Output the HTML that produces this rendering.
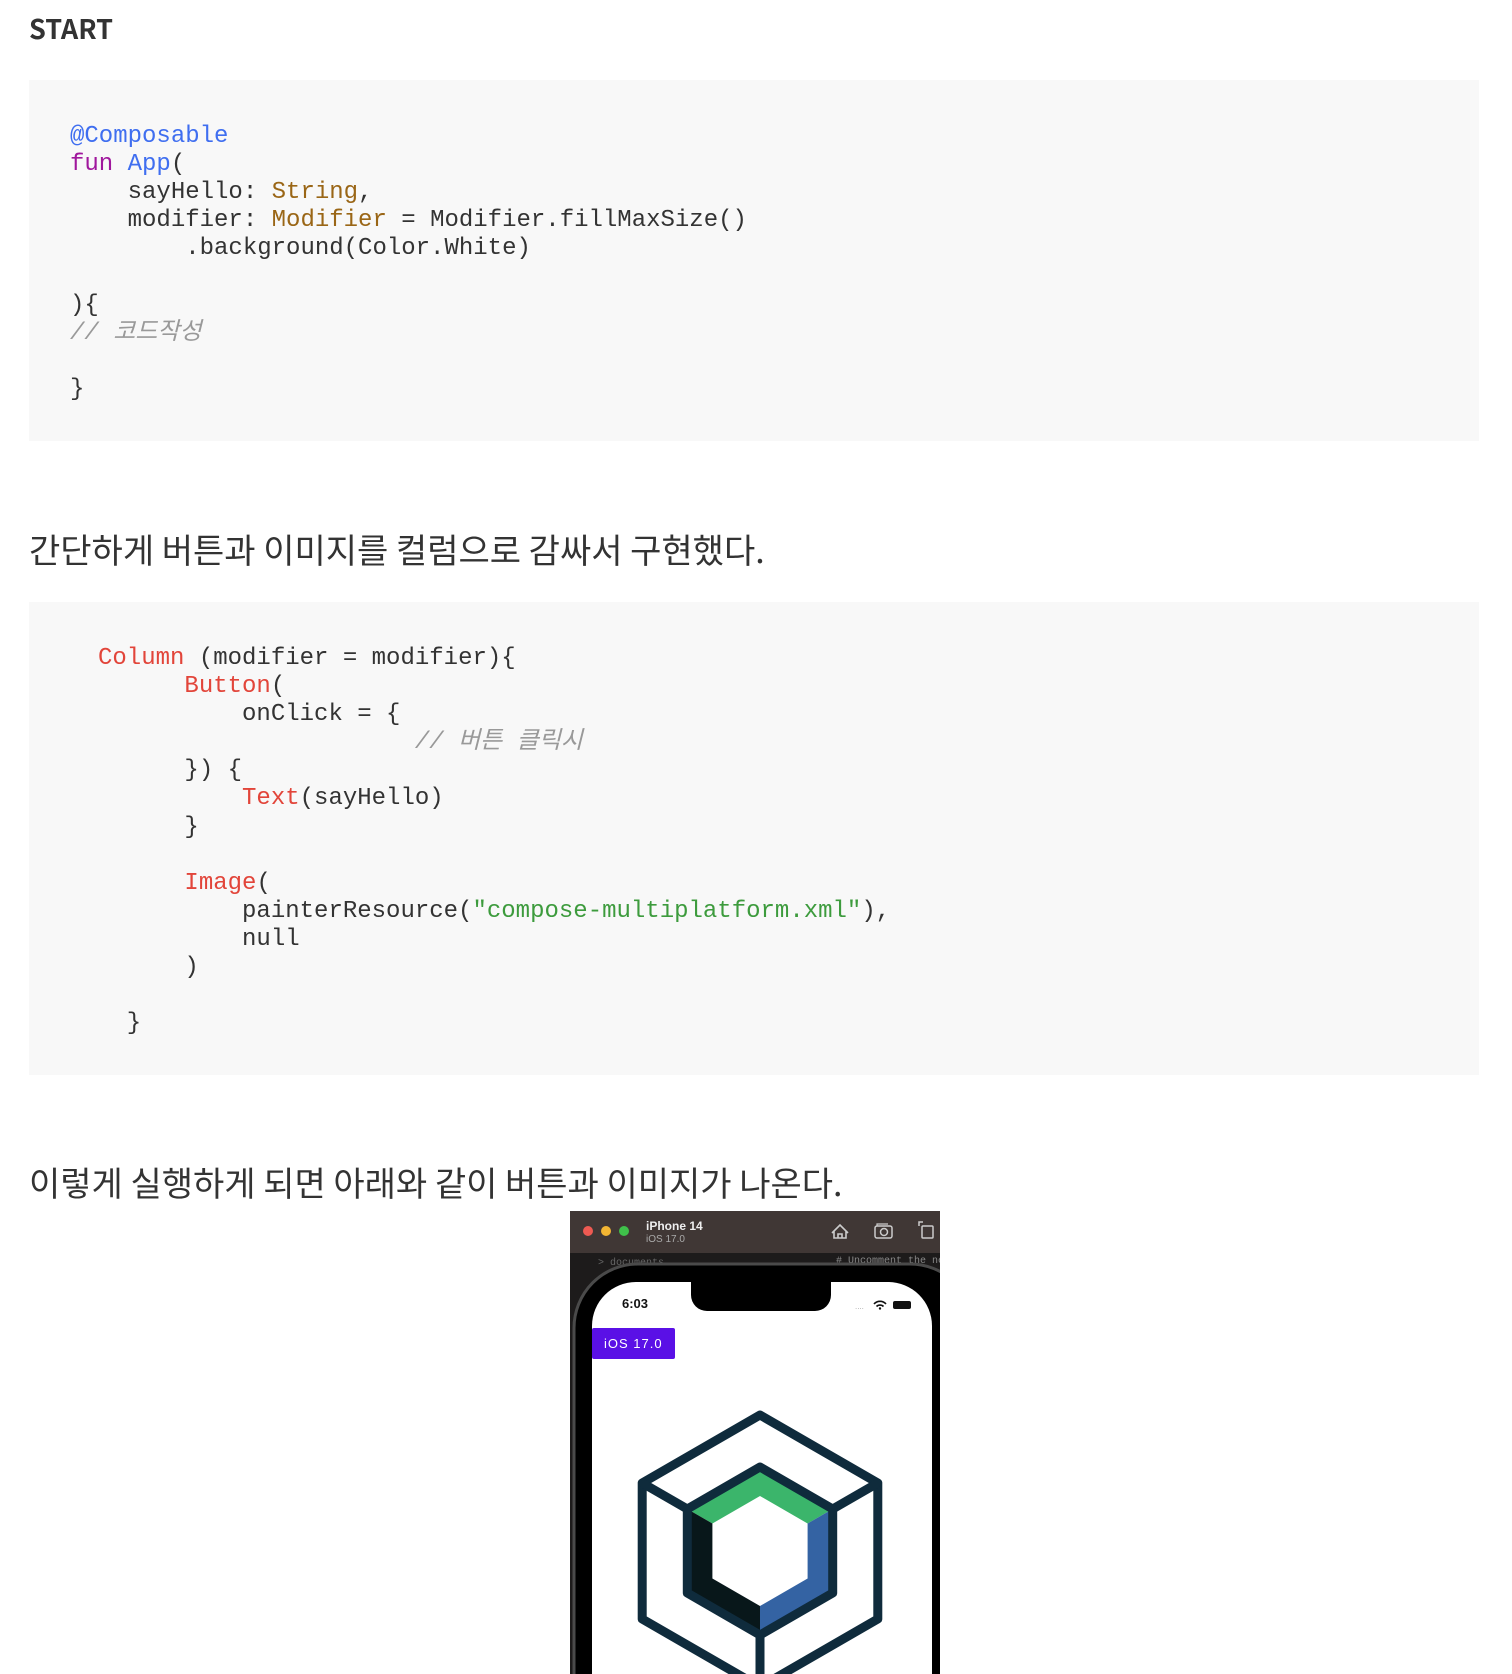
<!DOCTYPE html>
<html><head><meta charset="utf-8"><style>
body{margin:0;background:#fff;width:1512px;height:1674px;overflow:hidden;position:relative;font-family:"Liberation Sans","Noto Sans CJK KR",sans-serif;color:#333}
.h{position:absolute;left:29px;top:8px;font:bold 27px "Noto Sans CJK KR",sans-serif;color:#333}
.box{position:absolute;left:29px;width:1450px;background:#f8f8f8}
pre{margin:0;position:absolute;font:24px/28.1px "Liberation Mono","Noto Sans CJK KR",monospace;color:#333}
.p{position:absolute;left:29px;font:34px "Noto Sans CJK KR",sans-serif;color:#333}
.b{color:#3f6ef0}.k{color:#a0179d}.t{color:#9a6616}.r{color:#e2453a}.g{color:#3d9b3d}.c{color:#999;font-style:italic}
</style></head><body>
<div class="h">START</div>
<div class="box" style="top:80px;height:361px"></div>
<pre style="left:70px;top:123px"><span class="b">@Composable</span>
<span class="k">fun</span> <span class="b">App</span>(
    sayHello: <span class="t">String</span>,
    modifier: <span class="t">Modifier</span> = Modifier.fillMaxSize()
        .background(Color.White)

){
<span class="c">// 코드작성</span>

}</pre>
<div class="p" style="top:524px">간단하게 버튼과 이미지를 컬럼으로 감싸서 구현했다.</div>
<div class="box" style="top:602px;height:473px"></div>
<pre style="left:98px;top:645px"><span class="r">Column</span> (modifier = modifier){
      <span class="r">Button</span>(
          onClick = {
                      <span class="c">// 버튼 클릭시</span>
      }) {
          <span class="r">Text</span>(sayHello)
      }

      <span class="r">Image</span>(
          painterResource(<span class="g">"compose-multiplatform.xml"</span>),
          null
      )

  }</pre>
<div class="p" style="top:1157px">이렇게 실행하게 되면 아래와 같이 버튼과 이미지가 나온다.</div>
<svg style="position:absolute;left:570px;top:1211px" width="370" height="463" viewBox="0 0 370 463">
<rect x="0" y="0" width="370" height="463" fill="#1d1b1b"/>
<rect x="0" y="0" width="370" height="42" fill="#403735"/>
<circle cx="18" cy="20" r="5" fill="#ee5a52"/><circle cx="36" cy="20" r="5" fill="#f2b533"/><circle cx="54" cy="20" r="5" fill="#3fc04a"/>
<text x="76" y="19" font-family="Liberation Sans" font-weight="bold" font-size="12" fill="#eee">iPhone 14</text>
<text x="76" y="31" font-family="Liberation Sans" font-size="10" fill="#aaa">iOS 17.0</text>
<path d="M262 22 L270 14 L278 22 M264 20 V27 H276 V20 M268 27 V23 H272 V27" stroke="#ccc" stroke-width="1.6" fill="none"/>
<rect x="305" y="15" width="17" height="12" rx="2" stroke="#ccc" stroke-width="1.5" fill="none"/><circle cx="314" cy="21" r="3.5" stroke="#ccc" stroke-width="1.5" fill="none"/><path d="M307 15 V13 H318" stroke="#ccc" stroke-width="1.2" fill="none"/>
<rect x="352" y="15" width="11" height="12" rx="1" stroke="#ccc" stroke-width="1.5" fill="none"/><path d="M349 15 V11 H353" stroke="#ccc" stroke-width="1.5" fill="none"/>
<text x="266" y="52" font-family="Liberation Mono" font-size="10" fill="#888"># Uncomment the ne</text>
<text x="28" y="54" font-family="Liberation Mono" font-size="10" fill="#666">&gt;  documents</text>
<rect x="4" y="53" width="400" height="500" rx="64" fill="#000" stroke="#4a4a4a" stroke-width="3"/>
<rect x="22" y="71" width="340" height="500" rx="44" fill="#fff"/>
<rect x="121" y="55" width="140" height="45" rx="16" fill="#000"/>
<text x="52" y="97" font-family="Liberation Sans" font-weight="bold" font-size="13" fill="#111">6:03</text>
<path d="M304 93 a8 8 0 0 1 12 0 M306.5 95.5 a5 5 0 0 1 7 0" stroke="#111" stroke-width="1.6" fill="none"/><circle cx="310" cy="97.5" r="1.2" fill="#111"/>
<rect x="323" y="90" width="18" height="8" rx="2" fill="#111"/>
<text x="285" y="98" font-size="8" fill="#aaa" font-family="Liberation Sans">....</text>
<rect x="22" y="117" width="83" height="31" rx="2" fill="#5a10e6"/>
<text x="34" y="137" font-family="Liberation Sans" font-size="13" fill="#fff" letter-spacing="1">iOS 17.0</text>
<g stroke="#0f2b3c" stroke-width="9" stroke-linejoin="round" fill="none">
<polygon points="190,204 307.8,272 307.8,408 190,476 72.2,408 72.2,272"/>
<line x1="117.3" y1="298" x2="72.2" y2="272"/><line x1="262.7" y1="298" x2="307.8" y2="272"/><line x1="190" y1="424" x2="190" y2="476"/>
</g>
<polygon points="117.3,298 190,256 262.7,298 237.6,312.5 190,285 142.4,312.5" fill="#3bb56b"/>
<polygon points="262.7,298 262.7,382 190,424 190,395 237.6,367.5 237.6,312.5" fill="#3463a3"/>
<polygon points="190,424 117.3,382 117.3,298 142.4,312.5 142.4,367.5 190,395" fill="#08171a"/>
<polygon points="190,256 262.7,298 262.7,382 190,424 117.3,382 117.3,298" fill="none" stroke="#0f2b3c" stroke-width="9" stroke-linejoin="round"/>
</svg>
</body></html>
